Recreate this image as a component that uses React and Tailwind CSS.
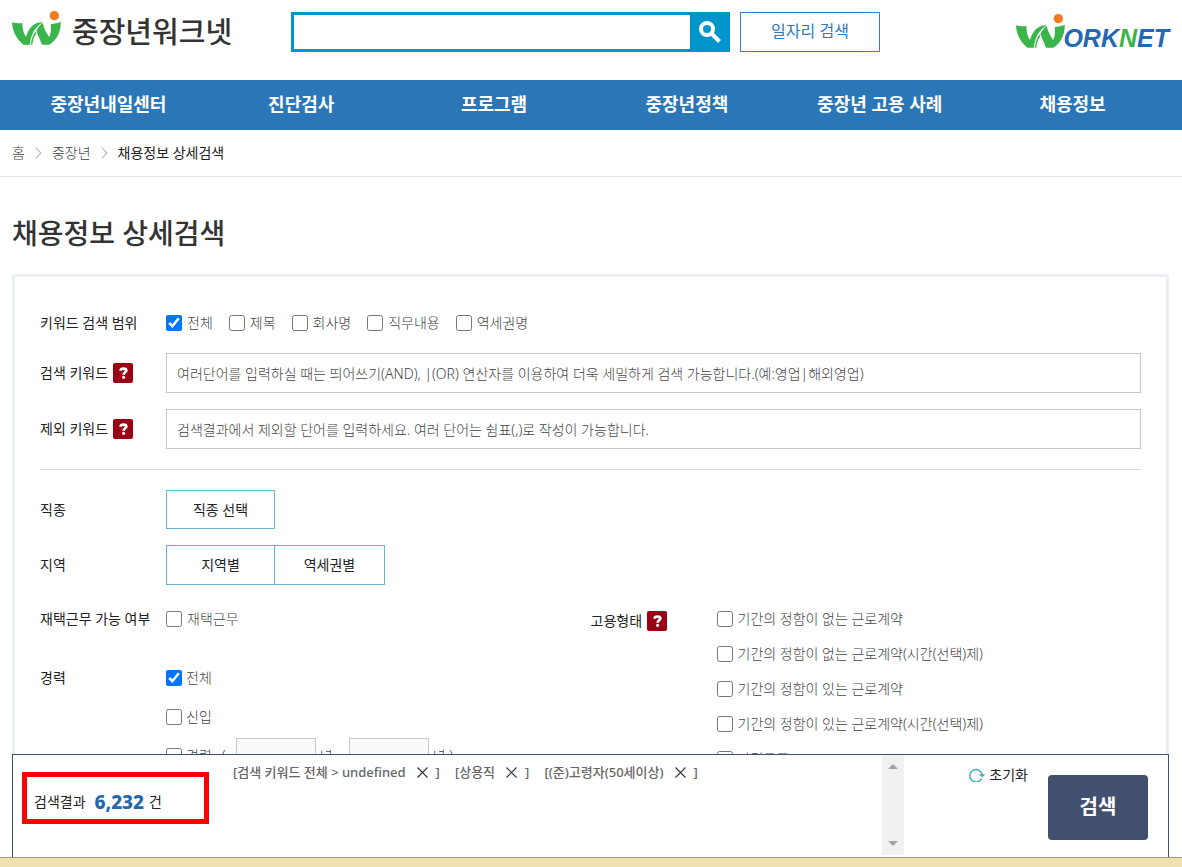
const NAV = ["중장년내일센터", "진단검사", "프로그램", "중장년정책", "중장년 고용 사례", "채용정보"];
const SCOPES = ["전체", "제목", "회사명", "직무내용", "역세권명"];
const EMPLOYMENT = [
  "기간의 정함이 없는 근로계약",
  "기간의 정함이 없는 근로계약(시간(선택)제)",
  "기간의 정함이 있는 근로계약",
  "기간의 정함이 있는 근로계약(시간(선택)제)",
  "파견근로",
];
const TAGS = ["검색 키워드 전체 > undefined", "상용직", "(준)고령자(50세이상)"];

function LogoMark() {
  return (
    <svg viewBox="0 0 147 102" className="h-[34px] w-[49px] shrink-0" aria-hidden="true">
      <path fill="#39b54a" d="M0 34C10 37 21 38 31 36C31 56 36 70 42 78C48 56 62 36 87 34L91 35C68 48 55 74 54 101H34C13 84 1 60 0 34Z" />
      <path fill="#39b54a" d="M92 36C96 54 104 68 112 78C117 66 118 52 116 39C127 38 137 36 146 32C148 62 133 88 112 101H90C84 84 77 72 73 60C78 50 84 42 92 36Z" />
      <path fill="#39b54a" d="M57 101C58 86 62 72 70 62L73 67C66 76 62 88 61 101Z" />
      <circle cx="127" cy="14" r="14" fill="#f47b20" />
    </svg>
  );
}

function Check({ label, id, checked, tight }) {
  return (
    <label htmlFor={id} className={`flex h-5 items-center font-light text-[#444] ${tight ? "gap-1" : "gap-[5px]"}`}>
      <input id={id} type="checkbox" defaultChecked={checked} className="m-0 size-4 accent-[#0075ff]" />
      <span className="whitespace-nowrap">{label}</span>
    </label>
  );
}

function Help({ label }) {
  return (
    <button type="button" aria-label={label} className="flex size-5 shrink-0 items-center justify-center rounded-xs bg-[#9b0014]">
      <svg viewBox="0 0 10 14" className="h-3 w-[9px]" fill="none" aria-hidden="true">
        <path d="M1.4 4.4C1.6 2.6 3 1.8 5 1.8C7 1.8 8.3 2.7 8.3 4.1C8.3 6.2 5.1 6.2 5.1 9" stroke="#fff" strokeWidth="3.2" />
        <circle cx="5.1" cy="12.1" r="1.8" fill="#fff" />
      </svg>
    </button>
  );
}

function RowLabel({ children, help }) {
  return (
    <div className="flex w-[126px] shrink-0 items-center gap-[5px] whitespace-nowrap text-[#222]">
      {children}
      {help && <Help label={help} />}
    </div>
  );
}

function KeywordRow({ id, label, placeholder }) {
  return (
    <div className="flex items-center">
      <RowLabel help={`${label} 도움말`}>
        <label htmlFor={id}>{label}</label>
      </RowLabel>
      <input
        id={id}
        type="text"
        placeholder={placeholder}
        className="h-10 min-w-0 flex-1 border border-[#c8c8c8] px-[10px] font-light placeholder:text-[#444]"
      />
    </div>
  );
}

function Cross() {
  return (
    <svg viewBox="0 0 11 11" className="size-[11px]" stroke="#333" strokeWidth="1.1" aria-hidden="true">
      <path d="M0.5 0.5L10.5 10.5M10.5 0.5L0.5 10.5" />
    </svg>
  );
}

function CrumbArrow() {
  return (
    <svg viewBox="0 0 7 12" className="h-3 w-[7px]" fill="none" stroke="#bbb" strokeWidth="1.2" aria-hidden="true">
      <path d="M0.8 0.6L6 6L0.8 11.4" />
    </svg>
  );
}

export default function App() {
  return (
    <div className="flex h-screen flex-col overflow-hidden bg-white font-['Noto_Sans','Noto_Sans_CJK_KR',sans-serif] text-sm text-[#333]">
      <header className="flex h-20 shrink-0 items-start pr-[13px] pl-3">
        <a href="#home" className="flex w-[279px] shrink-0 items-start gap-[11px] pt-[11px]">
          <LogoMark />
          <span className="text-[29px] leading-[42px] font-medium whitespace-nowrap text-[#333]">중장년워크넷</span>
        </a>
        <form className="mt-3 flex h-10 w-[439px] shrink-0" role="search">
          <input type="search" aria-label="통합검색" className="min-w-0 flex-1 border-3 border-r-0 border-[#0095cb] px-3 outline-none" />
          <button type="button" aria-label="검색하기" className="flex w-10 items-center justify-center bg-[#0095cb]">
            <svg viewBox="0 0 22 22" className="size-[22px]" fill="none" stroke="#fff" strokeWidth="4" aria-hidden="true">
              <circle cx="8" cy="8" r="6" />
              <path d="M12 12L20.5 20.5" />
            </svg>
          </button>
        </form>
        <button type="button" className="mt-3 ml-[10px] h-10 w-[140px] border border-[#3880c0] pb-[2px] text-base text-[#2f7abf]">
          일자리 검색
        </button>
        <a href="#worknet" aria-label="WORKNET" className="mt-[14px] ml-auto flex items-start">
          <LogoMark />
          <span className="-ml-[2px] pt-3 font-['Liberation_Sans',sans-serif] text-[25px] leading-6 font-bold italic text-[#2467b2]">
            ORK<span className="text-[#39b54a]">N</span>ET
          </span>
        </a>
      </header>

      <nav className="h-[50px] shrink-0 bg-[#2b76b7] pr-[13px] pl-3">
        <ul className="grid h-full grid-cols-6 items-center pb-[2px]">
          {NAV.map((item) => (
            <li key={item} className="text-center">
              <a href="#menu" className="text-lg font-semibold whitespace-nowrap text-white">{item}</a>
            </li>
          ))}
        </ul>
      </nav>

      <div className="flex h-[47px] shrink-0 items-center gap-[10px] border-b border-[#e5e5e5] px-3 text-sm">
        <a href="#home" className="font-light text-[#444]">홈</a>
        <CrumbArrow />
        <a href="#senior" className="font-light text-[#444]">중장년</a>
        <CrumbArrow />
        <span className="text-[#222]">채용정보 상세검색</span>
      </div>

      <main className="flex min-h-0 flex-1 flex-col overflow-hidden pr-[13px] pl-3">
        <h1 className="pt-[35px] pb-5 text-[28px] leading-[42px] font-medium text-[#333]">채용정보 상세검색</h1>

        <form className="shrink-0 border-3 border-[#ebeef2] px-[25px] pt-[36px] pb-10">
          <div className="flex h-5 items-center">
            <RowLabel>키워드 검색 범위</RowLabel>
            <div className="flex gap-4">
              {SCOPES.map((s, i) => (
                <Check key={s} id={`scope-${i}`} label={s} checked={i === 0} />
              ))}
            </div>
          </div>
          <div className="mt-5 flex flex-col gap-4 border-b border-[#ddd] pb-5">
            <KeywordRow
              id="include"
              label="검색 키워드"
              placeholder="여러단어를 입력하실 때는 띄어쓰기(AND), |(OR) 연산자를 이용하여 더욱 세밀하게 검색 가능합니다.(예:영업|해외영업)"
            />
            <KeywordRow
              id="exclude"
              label="제외 키워드"
              placeholder="검색결과에서 제외할 단어를 입력하세요. 여러 단어는 쉼표(,)로 작성이 가능합니다."
            />
          </div>

          <div className="mt-5 flex items-center">
            <RowLabel>직종</RowLabel>
            <button type="button" className="h-[39px] w-[109px] border border-[#68b5cf] text-[#222]">직종 선택</button>
          </div>
          <div className="mt-4 flex items-center">
            <RowLabel>지역</RowLabel>
            <button type="button" className="h-10 w-[109px] border border-[#68b5cf] text-[#222]">지역별</button>
            <button type="button" className="h-10 w-[110px] border border-l-0 border-[#68b5cf] text-[#222]">역세권별</button>
          </div>

          <div className="mt-6 grid grid-cols-2">
            <div className="flex flex-col gap-[39px]">
              <div className="flex h-5 items-center">
                <RowLabel>재택근무 가능 여부</RowLabel>
                <Check id="remote" label="재택근무" />
              </div>
              <div className="flex items-start">
                <RowLabel>경력</RowLabel>
                <div className="flex flex-col gap-[19px]">
                  <Check id="career-all" label="전체" checked tight />
                  <Check id="career-new" label="신입" tight />
                  <div className="flex h-5 items-center font-light text-[#444]">
                    <Check id="career-exp" label="경력" tight />
                    <span className="w-6 text-center">(</span>
                    <input type="text" aria-label="최소 경력" className="h-9 w-20 border border-[#c8c8c8] bg-[#fafafa]" />
                    <span className="w-[33px] pl-1">년 ~</span>
                    <input type="text" aria-label="최대 경력" className="h-9 w-20 border border-[#c8c8c8] bg-[#fafafa]" />
                    <span className="pl-1">년 )</span>
                  </div>
                </div>
              </div>
            </div>
            <div className="flex items-start">
              <div className="pt-[2px]">
                <RowLabel help="고용형태 도움말">고용형태</RowLabel>
              </div>
              <div className="flex flex-col gap-[15px]">
                {EMPLOYMENT.map((e, i) => (
                  <Check key={e} id={`employment-${i}`} label={e} />
                ))}
              </div>
            </div>
          </div>
        </form>
      </main>

      <section className="shrink-0 pr-[13px] pl-3">
        <div className="flex h-[103px] border border-b-0 border-[#41506e]">
          <div className="mt-[17px] ml-[9px] flex h-[52px] w-[187px] shrink-0 items-center border-5 border-[#ff0000] pt-2 pl-[7px] text-[#222]">
            <span>검색결과</span>
            <strong className="mr-[5px] ml-[9px] text-[19px] leading-6 font-extrabold text-[#2369a9]">6,232</strong>
            <span>건</span>
          </div>
          <ul className="flex min-w-0 flex-1 items-start gap-[15px] pt-[7px] pl-6 text-[13px] leading-5 font-medium text-[#666]">
            {TAGS.map((t) => (
              <li key={t} className="flex items-center whitespace-nowrap">
                <span>[{t}</span>
                <button type="button" aria-label="조건 삭제" className="mr-2 ml-[11px]">
                  <Cross />
                </button>
                <span>]</span>
              </li>
            ))}
          </ul>
          <div className="flex h-[100px] w-[22px] shrink-0 flex-col items-center justify-between bg-[#f1f1f1] py-[9px]">
            <svg viewBox="0 0 10 5" className="h-[5px] w-[10px]" fill="#a3a3a3" aria-hidden="true"><path d="M0 5L5 0L10 5Z" /></svg>
            <svg viewBox="0 0 10 5" className="h-[5px] w-[10px]" fill="#a3a3a3" aria-hidden="true"><path d="M0 0L5 5L10 0Z" /></svg>
          </div>
          <div className="flex w-[264px] shrink-0 items-start justify-end pr-5">
            <button type="button" className="mt-[10px] mr-5 flex items-center gap-1 leading-5 text-[#222]">
              <svg viewBox="0 0 16 14" className="h-[14px] w-4" fill="none" aria-hidden="true">
                <path d="M12.6 10.5A6.2 6.2 0 1 1 13.2 7" stroke="#3ba9cf" strokeWidth="1.4" />
                <path d="M10 6.2H16.2L13.1 9.4Z" fill="#3ba9cf" />
              </svg>
              초기화
            </button>
            <button type="button" className="mt-5 h-[65px] w-[100px] rounded-sm bg-[#41506e] pb-[2px] text-xl font-bold text-white">
              검색
            </button>
          </div>
        </div>
      </section>
      <footer className="h-[10px] shrink-0 border-t border-[#a09a80] bg-[#efe2ae]" />
    </div>
  );
}
